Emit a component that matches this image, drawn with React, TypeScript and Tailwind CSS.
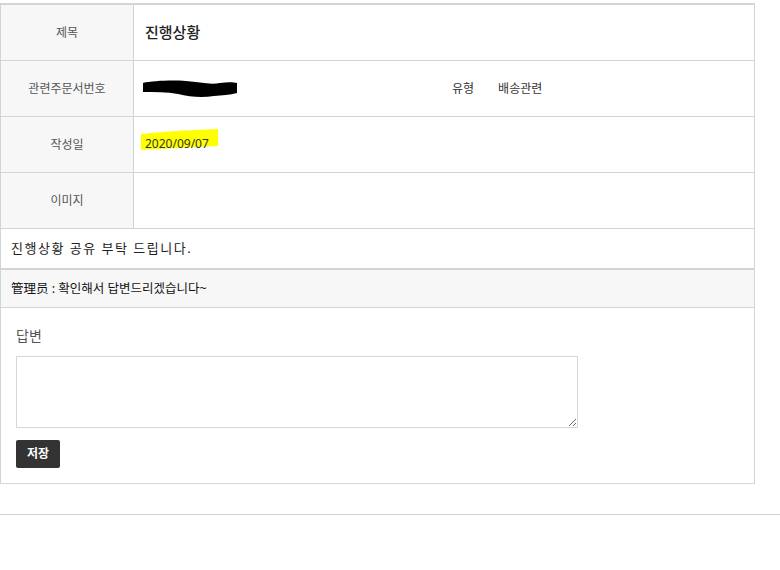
import React from "react";

const font = { fontFamily: '"Noto Sans", "Noto Sans CJK KR", sans-serif' };

function Redaction() {
  // black marker scribble over the order number
  return (
    <svg width="96" height="18" viewBox="0 0 96 18" className="block">
      <path
        d="M1 3 C10 1 28 0 44 1 C57 2 68 5 78 3 C85 2 91 2 95 3 L95 13 C88 15 80 15 72 16 C60 18 48 17 36 14 C25 12 12 12 1 12 Z"
        fill="#000"
      />
    </svg>
  );
}

function Row({ label, children, cls = "" }: { label: string; children?: React.ReactNode; cls?: string }) {
  return (
    <div className="flex h-[56px] border-b border-[#d0d5da]">
      <div className="w-[133px] shrink-0 bg-[#f7f7f7] border-r border-[#d0d5da] flex items-center justify-center text-[12px] text-[#555]">
        {label}
      </div>
      <div className={`flex-1 flex items-center ${cls}`}>{children}</div>
    </div>
  );
}

export default function App() {
  return (
    <div className="bg-white w-[780px] h-[570px] pt-[3px]" style={font}>
      <div className="w-[755px] border-t-2 border-[#d0d5da]">
        <div className="border-l border-r border-[#d0d5da]">
          <Row label="제목" cls="pl-[11px]">
            <span className="text-[15px] font-medium text-[#222]">진행상황</span>
          </Row>
          <Row label="관련주문서번호" cls="pl-[8px]">
            <div className="w-[310px]">
              <Redaction />
            </div>
            <span className="text-[12px] text-[#333]">유형</span>
            <span className="ml-[24px] text-[12px] text-[#333]">배송관련</span>
          </Row>
          <Row label="작성일" cls="pl-[11px]">
            <div className="relative mb-[6px]">
              <svg width="80" height="24" viewBox="0 0 80 24" className="absolute left-[-5px] top-[-1px]">
                <path d="M1 5 C20 3 45 1 78 0 L78 17 C50 18 25 20 1 21 Z" fill="#ffff00" />
              </svg>
              <span className="relative text-[12px] text-[#333]">2020/09/07</span>
            </div>
          </Row>
          <Row label="이미지" />
          <div className="h-[41px] flex items-center pl-[10px] text-[13px] text-[#222] tracking-[1.5px] border-b-2 border-[#d0d5da]">
            진행상황 공유 부탁 드립니다.
          </div>
          <div className="h-[38px] bg-[#f7f7f7] border-b border-[#d0d5da] flex items-center pl-[10px] pt-[2px] text-[12.5px] text-[#111]">
            管理员 : 확인해서 답변드리겠습니다~
          </div>
          <div className="h-[176px] border-b border-[#d6d6d6] pl-[15px] pt-[18px]">
            <div className="text-[14px] text-[#555] leading-[20px]">답변</div>
            <textarea className="mt-[10px] block w-[562px] h-[72px] border border-[#d6d6d6] bg-white" />
            <button className="mt-[12px] w-[44px] h-[28px] bg-[#333] rounded-[2px] text-white text-[12px] font-bold">
              저장
            </button>
          </div>
        </div>
      </div>
      <div className="mt-[30px] border-t border-[#d0d0d0]" />
    </div>
  );
}
